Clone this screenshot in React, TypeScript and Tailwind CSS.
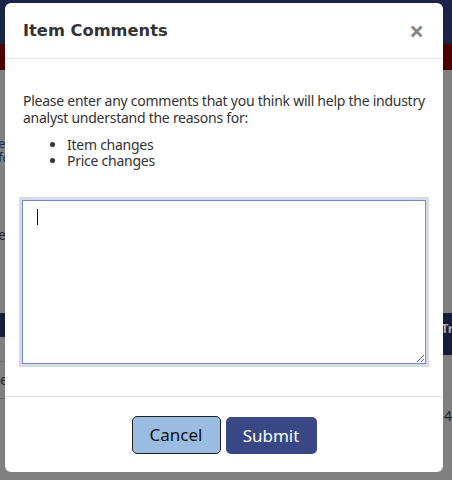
import { FC, ReactElement } from "react";

const Backdrop: FC = (): ReactElement => (
  <div className="flex flex-col w-[452px] h-[480px] bg-[#808080] overflow-hidden font-['Noto_Sans',sans-serif]">
    <div className="h-[44px] bg-[#1b2446]" />
    <div className="h-[26px] bg-[#4d0000]" />
    <div className="flex-1 flex flex-col">
      <div className="h-[66px]" />
      <div className="text-[13px] leading-[14px] text-[#1a2a55] -ml-[2px]">
        <div>er</div>
        <div>fd</div>
      </div>
      <div className="h-[60px]" />
      <div className="text-[14px] text-[#222] -ml-[2px]">e</div>
      <div className="h-[68px]" />
      <div className="flex justify-between">
        <div className="w-[10px] h-[24px] bg-[#161d38]" />
        <div className="w-[12px] h-[42px] bg-[#161d38] text-[13px] font-bold text-[#aaa] leading-[30px] -mr-[1px]">Tr</div>
      </div>
      <div className="flex justify-between mt-[6px]">
        <div className="w-[10px] border-t border-b border-[#6a6a6a] h-[38px] text-[14px] text-[#222] leading-[36px]">e</div>
        <div className="w-[12px] border-l border-[#6a6a6a] h-[60px] text-[14px] text-[#222] leading-[110px] pl-[3px]">4</div>
      </div>
    </div>
  </div>
);

const CommentsModal: FC = (): ReactElement => (
  <div className="absolute left-[5px] top-[3px] w-[438px] h-[469px] bg-white rounded-[6px] flex flex-col font-['Noto_Sans',sans-serif] text-[#333]">
    <header className="h-[56px] flex items-center justify-between px-[18px] border-b border-[#e5e5e5]">
      <h2 className="font-['DejaVu_Sans',sans-serif] font-bold text-[16.3px] text-[#333] pt-[1px]">
        Item Comments
      </h2>
      <span className="text-[#888] text-[26px] leading-none font-bold mr-[1px]">×</span>
    </header>
    <section className="flex-1 flex flex-col px-[18px] pt-[33px] border-b border-[#e5e5e5]">
      <p className="text-[14px] leading-[17px] tracking-[-0.26px] text-[#333]">
        Please enter any comments that you think will help the industry analyst understand the reasons for:
      </p>
      <ul className="list-disc pl-[44px] mt-[11px] text-[14px] leading-[16px] tracking-[-0.26px]">
        <li>Item changes</li>
        <li>Price changes</li>
      </ul>
      <div className="relative mt-[28px] -mx-[4px] p-[3px] bg-[#d5dbe9]">
        <textarea
          autoFocus
          className="block w-full h-[164px] border border-[#7388cf] bg-white outline-none px-[14px] py-[8px] text-[14px] resize"
        />
        <span className="absolute left-[18px] top-[12px] w-px h-[16px] bg-[#111]" />
      </div>
    </section>
    <footer className="h-[75px] flex items-start justify-center gap-[5px] pt-[19px]">
      <button className="w-[89px] h-[38px] rounded-[5px] border border-[#1f1f1f] bg-[#99bce0] text-[#111] text-[17px]">
        Cancel
      </button>
      <button className="w-[91px] h-[37px] mt-[1px] rounded-[5px] bg-[#394884] text-white text-[17px]">
        Submit
      </button>
    </footer>
  </div>
);

export default function App(): ReactElement {
  return (
    <div className="relative w-[452px] h-[480px]">
      <Backdrop />
      <CommentsModal />
    </div>
  );
}
